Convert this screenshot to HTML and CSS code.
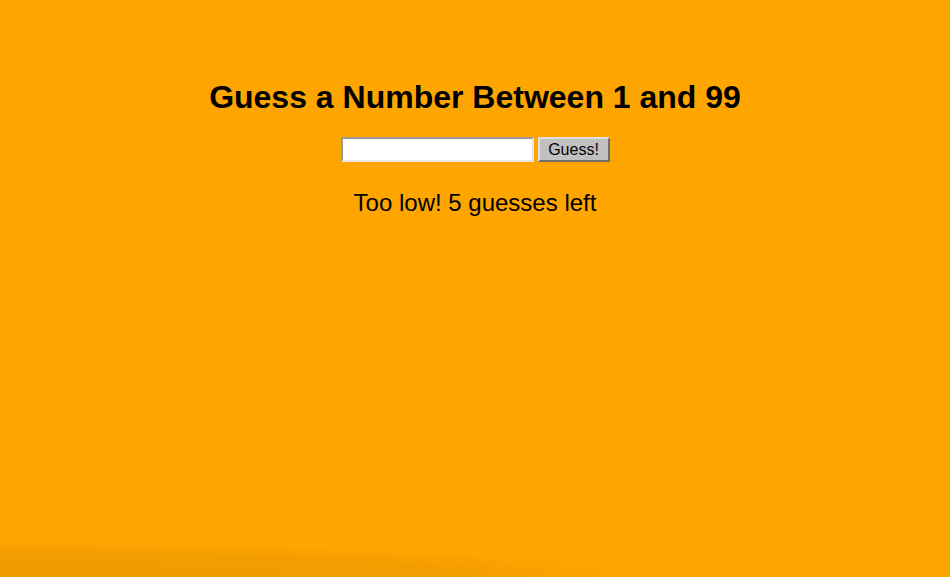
FILE: index.html
```html
<!DOCTYPE html>
<html>
<head>
<meta charset="utf-8">
<link rel="stylesheet" href="styles.css">
</head>
<body>
<main class="game">
  <h1 class="title">Guess a Number Between 1 and 99</h1>
  <form class="guess-form">
    <input class="guess-input" type="text">
    <button class="guess-btn" type="button">Guess!</button>
  </form>
  <p class="message">Too low! 5 guesses left</p>
</main>
</body>
</html>
```
FILE: styles.css
```css
html, body {
  margin: 0;
  height: 100%;
}
body {
  background-color: #ffa500;
  background-image: radial-gradient(ellipse 640px 34px at 0 100%, rgba(90,45,0,0.08) 0%, rgba(90,45,0,0.07) 70%, rgba(90,45,0,0) 100%);
  background-repeat: no-repeat;
  font-family: "Liberation Sans", Arial, sans-serif;
  color: #000;
}
.game {
  display: flex;
  flex-direction: column;
  align-items: center;
  padding-top: 79px;
}
.title {
  margin: 0;
  font-size: 32px;
  font-weight: bold;
  line-height: 37px;
}
.guess-form {
  display: flex;
  gap: 4px;
  margin-top: 21px;
}
.guess-input {
  box-sizing: border-box;
  width: 193px;
  height: 25px;
  margin: 0;
  background: #fff;
  border-style: solid;
  border-width: 2px;
  border-color: #9a9a9a #e6e6e6 #e6e6e6 #9a9a9a;
}
.guess-btn {
  box-sizing: border-box;
  height: 25px;
  width: 72px;
  margin: 0;
  padding: 0 6px;
  background: #c0c0c0;
  font-family: "Liberation Sans", Arial, sans-serif;
  font-size: 16px;
  color: #000;
  border-style: solid;
  border-width: 2px;
  border-color: #dedede #6e6e6e #6e6e6e #dedede;
}
.message {
  margin: 27px 0 0;
  font-size: 24px;
  line-height: 28px;
}
```
